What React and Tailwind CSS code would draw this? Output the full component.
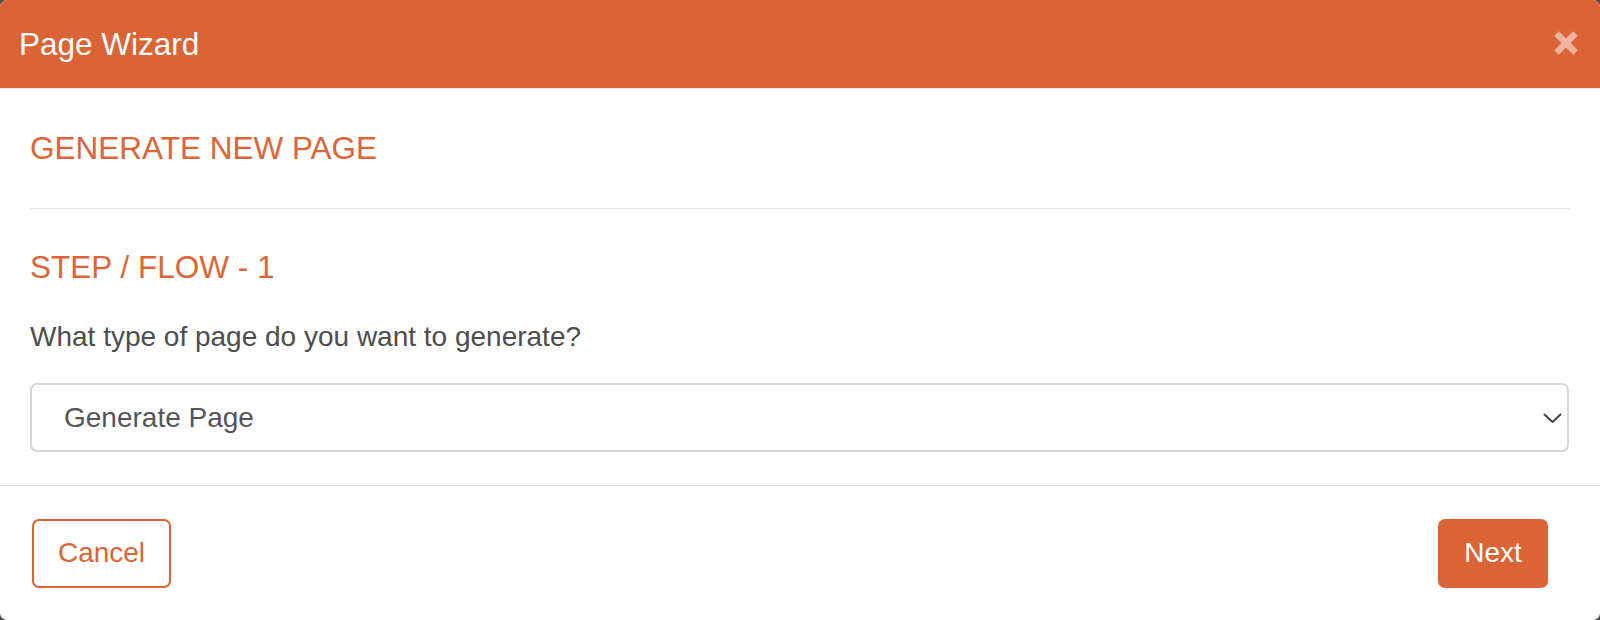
import React from 'react';

// Close "x" drawn as two thick strokes
const CloseIcon = () => (
    <svg width="26" height="26" viewBox="0 0 26 26" aria-hidden="true">
        <g stroke="#efb39c" strokeWidth="6.5" strokeLinecap="butt">
            <line x1="3.5" y1="3.5" x2="22.5" y2="22.5" />
            <line x1="22.5" y1="3.5" x2="3.5" y2="22.5" />
        </g>
    </svg>
);

const Chevron = () => (
    <svg width="19" height="11" viewBox="0 0 19 11" aria-hidden="true">
        <path d="M1.5 1.5 L9.5 9 L17.5 1.5" fill="none" stroke="#444" strokeWidth="2" strokeLinecap="round" strokeLinejoin="round" />
    </svg>
);

export default function App() {
    return (
        <div className="w-full h-[620px] bg-[#4a4a4a] font-['Liberation_Sans',Arial,sans-serif]">
            <div className="h-full bg-white rounded-[7px] overflow-hidden flex flex-col">
                {/* Header */}
                <div className="h-[89px] shrink-0 bg-[#db6437] border-b border-[#dee2e6] flex items-center justify-between pl-[19px] pr-[21px]">
                    <h1 className="text-[31.5px] leading-[38px] text-white font-normal">Page Wizard</h1>
                    <button className="flex items-center justify-center -mt-[2px]">
                        <CloseIcon />
                    </button>
                </div>

                {/* Body */}
                <div className="px-[30px] pt-[40px] pb-[33px] border-b border-[#dee2e6]">
                    <h2 className="text-[31.5px] leading-[38px] text-[#dc6537] font-normal">GENERATE NEW PAGE</h2>
                    <hr className="mt-[41px] border-0 h-px bg-[#e3e3e3]" />
                    <h3 className="mt-[39px] text-[31.5px] leading-[38px] text-[#dc6537] font-normal">STEP / FLOW - 1</h3>
                    <p className="mt-[34px] text-[28px] leading-[34px] text-[#4d4d4d]">What type of page do you want to generate?</p>
                    <div className="mt-[29px] h-[69px] w-[1539px] border-2 border-[#d3d6da] rounded-[7px] flex items-center justify-between pl-[32px] pr-[5px]">
                        <span className="text-[28px] text-[#555]">Generate Page</span>
                        <span className="mt-[2px]"><Chevron /></span>
                    </div>
                </div>

                {/* Footer */}
                <div className="flex-1 flex items-center justify-between pl-[32px] pr-[52px]">
                    <button className="w-[139px] h-[69px] border-2 border-[#db6437] rounded-[7px] text-[28px] text-[#db6437] flex items-center justify-center">
                        Cancel
                    </button>
                    <button className="w-[110px] h-[69px] bg-[#db6437] rounded-[7px] text-[28px] text-white flex items-center justify-center">
                        Next
                    </button>
                </div>
            </div>
        </div>
    );
}
